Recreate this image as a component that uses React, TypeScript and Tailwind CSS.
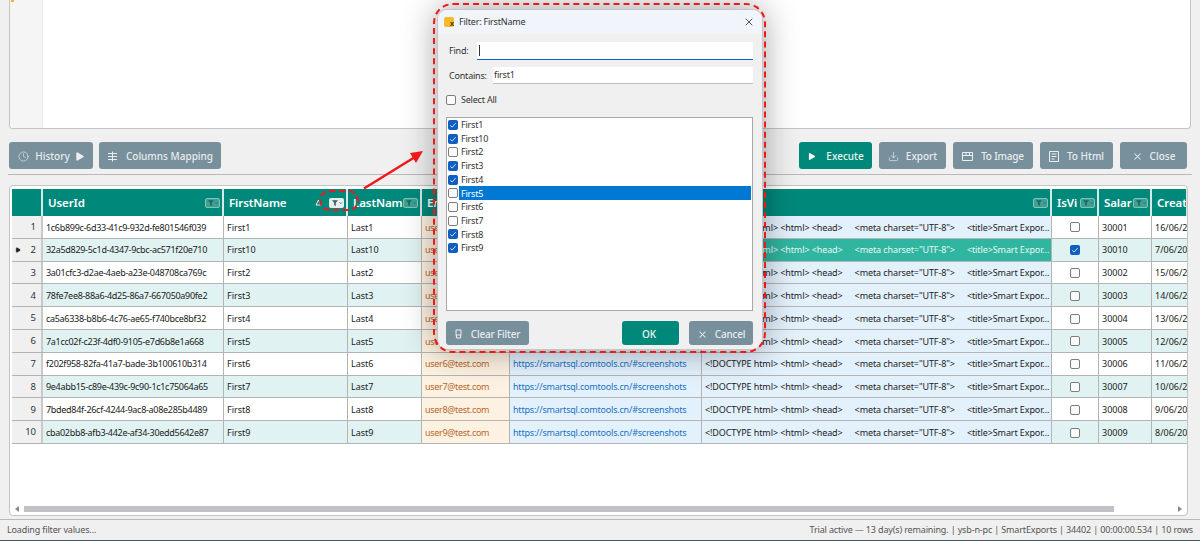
import React from "react";
import { Clock, Download, Play, X } from "lucide-react";

interface Row {
  id: string;
  first: string;
  last: string;
  email: string;
  salary: string;
  created: string;
  checked?: boolean;
  selected?: boolean;
}

const rows: Row[] = [
  { id: "1c6b899c-6d33-41c9-932d-fe801546f039", first: "First1", last: "Last1", email: "user0@test.com", salary: "30001", created: "16/06/2025" },
  { id: "32a5d829-5c1d-4347-9cbc-ac571f20e710", first: "First10", last: "Last10", email: "user9@test.com", salary: "30010", created: "7/06/2025", checked: true, selected: true },
  { id: "3a01cfc3-d2ae-4aeb-a23e-048708ca769c", first: "First2", last: "Last2", email: "user1@test.com", salary: "30002", created: "15/06/2025" },
  { id: "78fe7ee8-88a6-4d25-86a7-667050a90fe2", first: "First3", last: "Last3", email: "user2@test.com", salary: "30003", created: "14/06/2025" },
  { id: "ca5a6338-b8b6-4c76-ae65-f740bce8bf32", first: "First4", last: "Last4", email: "user3@test.com", salary: "30004", created: "13/06/2025" },
  { id: "7a1cc02f-c23f-4df0-9105-e7d6b8e1a668", first: "First5", last: "Last5", email: "user4@test.com", salary: "30005", created: "12/06/2025" },
  { id: "f202f958-82fa-41a7-bade-3b100610b314", first: "First6", last: "Last6", email: "user6@test.com", salary: "30006", created: "11/06/2025" },
  { id: "9e4abb15-c89e-439c-9c90-1c1c75064a65", first: "First7", last: "Last7", email: "user7@test.com", salary: "30007", created: "10/06/2025" },
  { id: "7bded84f-26cf-4244-9ac8-a08e285b4489", first: "First8", last: "Last8", email: "user8@test.com", salary: "30008", created: "9/06/2025" },
  { id: "cba02bb8-afb3-442e-af34-30edd5642e87", first: "First9", last: "Last9", email: "user9@test.com", salary: "30009", created: "8/06/2025" },
];

const filterItems = [
  { label: "First1", checked: true },
  { label: "First10", checked: true },
  { label: "First2", checked: false },
  { label: "First3", checked: true },
  { label: "First4", checked: true },
  { label: "First5", checked: false, selected: true },
  { label: "First6", checked: false },
  { label: "First7", checked: false },
  { label: "First8", checked: true },
  { label: "First9", checked: true },
];

const slateBtn =
  "flex items-center justify-center rounded-[3px] bg-[#78909c] pt-[2px] text-[10px] font-medium text-[#e6ebee]";
const tealBtn =
  "flex items-center justify-center rounded-[3px] bg-[#00897b] pt-[2px] text-[10px] font-medium text-[#e9f5f3]";

const FilterIcon = ({ active }: { active?: boolean }) => (
  <span
    className={
      active
        ? "flex h-[10px] w-[15px] shrink-0 items-center justify-center rounded-[2px] bg-[#e8f0ef]"
        : "flex h-[10px] w-[15px] shrink-0 items-center justify-center rounded-[2px] border border-[#7fc4bb] bg-[#3f9f93]"
    }
  >
    <svg width="13" height="8" viewBox="0 0 13 8" fill="none">
      <path d="M2 1.200h6L5.800 3.800V7L4.200 6.200V3.800z" fill={active ? "#33615b" : "#0f6d62"} />
      <path d="M9.600 3.400l1.200 1.200 1.200-1.200" stroke={active ? "#33615b" : "#0f6d62"} strokeWidth="0.8" />
    </svg>
  </span>
);

const CheckBox = ({ checked, size }: { checked?: boolean; size: string }) => (
  <span
    className={
      (checked
        ? "flex items-center justify-center rounded-[2px] bg-[#0f5fc0] "
        : "flex items-center justify-center rounded-[2px] border border-[#7d7d7d] bg-[#fbfbfb] ") + size
    }
  >
    {checked && (
      <svg width="8" height="8" viewBox="0 0 8 8" fill="none">
        <path d="M1.300 4.300l1.800 1.800 3.600-4" stroke="#dbe9fb" strokeWidth="0.9" />
      </svg>
    )}
  </span>
);

const HeaderCell = ({ className, label, filter = true }: { className: string; label?: string; filter?: boolean }) => (
  <div className={"flex h-full shrink-0 items-center justify-between overflow-hidden border-r-2 border-[#d8e8e6] pr-[2px] pl-[5px] " + className}>
    <span className="text-[11.5px] font-semibold tracking-[-0.1px] text-white">{label}</span>
    {filter && <FilterIcon />}
  </div>
);

const cellBase = "flex h-full shrink-0 items-center overflow-hidden whitespace-nowrap border-r border-[#b4b4b4] pt-[1px] pl-[3px]";

const TableRow = ({ row, index }: { row: Row; index: number }) => {
  const tint = index % 2 === 1 ? "bg-[#e0f2f1]" : "bg-white";
  return (
    <div className="flex h-[22.8px] border-b border-[#b4b4b4] text-[9px] tracking-[-0.3px] text-[#222]">
      <div className="flex h-full w-[31px] shrink-0 items-center justify-end border-r-2 border-[#c9c9c9] bg-[#f0f0f0] pt-[1px] pr-[5px] text-[9.5px] tracking-normal text-[#333]">
        {row.selected && <Play size={6} fill="#222" stroke="#222" className="mr-auto ml-[3px]" />}
        {index + 1}
      </div>
      <div className={cellBase + " w-[181px] pl-[2px] " + tint}>{row.id}</div>
      <div className={cellBase + " w-[124px] tracking-normal " + tint}>{row.first}</div>
      <div className={cellBase + " w-[74px] tracking-normal " + tint}>{row.last}</div>
      <div className={cellBase + " w-[88px] bg-[#fdf1e1] text-[#b9682c]"}>{row.email}</div>
      <div className={cellBase + " w-[192px] bg-[#e3f1fd] tracking-[-0.2px] text-[#1a72c4]"}>https://smartsql.comtools.cn/#screenshots</div>
      <div className={cellBase + " w-[350px] tracking-[-0.1px] " + (row.selected ? "bg-[#30b5a0] text-[#e8f7f4]" : "bg-[#e3f1fd]")}>
        {"<!DOCTYPE html> <html> <head>"}
        <span className="ml-[12px]">{'<meta charset="UTF-8">'}</span>
        <span className="ml-[12px]">{"<title>Smart Expor..."}</span>
      </div>
      <div className={cellBase + " w-[47px] justify-center pr-[3px] pl-0 " + tint}>
        <CheckBox checked={row.checked} size="h-[10px] w-[10px]" />
      </div>
      <div className={cellBase + " w-[53px] tracking-normal " + tint}>{row.salary}</div>
      <div className={cellBase + " w-[36px] border-r-0 tracking-normal " + tint}>{row.created}</div>
    </div>
  );
};

const FilterDialog = () => (
  <div className="absolute top-[9px] left-[437px] flex h-[341px] w-[326px] flex-col overflow-hidden rounded-[10px] border border-[#c4c4c4] bg-[#f0f0f0] shadow-[0_0_34px_rgba(0,0,0,0.38)]">
    <div className="flex h-[24px] shrink-0 items-center bg-[#f1f4fa] pr-[7px] pl-[6px]">
      <span className="flex h-[10px] w-[10px] items-end justify-end rounded-[2px] bg-[#f6b92c] text-[7px] leading-[7px] font-bold text-[#5a3a00]">x</span>
      <span className="ml-[5px] text-[9px] tracking-[-0.2px] text-[#333]">Filter: FirstName</span>
      <X size={12} strokeWidth={1.5} className="ml-auto text-[#222]" />
    </div>
    <div className="flex flex-1 flex-col pt-[8px] pr-[9px] pb-[5px] pl-[8px] text-[9px] tracking-[-0.2px] text-[#333]">
      <div className="flex h-[18px] items-center">
        <span className="ml-[3px] w-[28px]">Find:</span>
        <div className="flex h-full flex-1 items-center border-b-[1.5px] border-[#0a66c8] bg-white pl-[2px]">
          <span className="h-[11px] w-px bg-[#333]" />
        </div>
      </div>
      <div className="mt-[7px] flex h-[17px] items-center">
        <span className="ml-[3px] w-[44px]">Contains:</span>
        <div className="flex h-full flex-1 items-center border-b border-[#bdbdbd] bg-white pl-[1px]">first1</div>
      </div>
      <div className="mt-[10px] flex h-[12px] items-center gap-[5px]">
        <CheckBox size="h-[10px] w-[10px]" />
        <span>Select All</span>
      </div>
      <div className="mt-[11px] flex h-[194px] flex-col border border-[#a8a8a8] bg-white pr-[1px] pl-[1px]">
        {filterItems.map((item) => (
          <div key={item.label} className="flex h-[13.7px] shrink-0 items-center">
            <CheckBox checked={item.checked} size="h-[10px] w-[10px] shrink-0" />
            <span className={item.selected ? "ml-[1px] flex h-full flex-1 items-center bg-[#0078d4] pl-[2px] text-white" : "ml-[1px] pl-[2px]"}>
              {item.label}
            </span>
          </div>
        ))}
      </div>
      <div className="mt-[10px] flex items-center">
        <button className={slateBtn + " h-[24px] w-[83px] gap-[9px]"}>
          <svg width="7" height="10" viewBox="0 0 7 10" fill="none">
            <path d="M1 1h5v4l-.6 4H1.600L1 5z" stroke="#eceff1" strokeWidth="1" />
            <path d="M1 6h5" stroke="#eceff1" strokeWidth="1" />
          </svg>
          Clear Filter
        </button>
        <button className={tealBtn + " ml-auto h-[24px] w-[57px] pr-[3px]"}>OK</button>
        <button className={slateBtn + " ml-[10px] h-[24px] w-[64px] gap-[7px]"}>
          <X size={11} strokeWidth={2.2} />
          Cancel
        </button>
      </div>
    </div>
  </div>
);

const App: React.FC = () => {
  return (
    <div className="relative flex h-[541px] w-[1200px] flex-col overflow-hidden bg-[#f0f0f0] [font-family:'Noto_Sans',sans-serif]">
      {/* Editor */}
      <div className="mx-[9px] flex h-[129px] shrink-0 overflow-hidden rounded-b-[4px] border-r border-b border-l border-[#c4c4c4] bg-white">
        <div className="h-full w-[33px] border-r border-[#ececec] bg-[#f5f5f5]">
          <div className="ml-[1px] h-[2px] w-[3px] bg-[#f2b632]" />
        </div>
      </div>

      {/* Toolbar */}
      <div className="mt-[13px] flex shrink-0 items-center px-[9px]">
        <button className={slateBtn + " h-[27px] w-[84px] gap-[4px] pl-[1px]"}>
          <Clock size={11} strokeWidth={1.4} />
          <span className="ml-[2px]">History</span>
          <Play size={11} fill="#eceff1" strokeWidth={0} />
        </button>
        <button className={slateBtn + " ml-[6px] h-[27px] w-[122px] gap-[8px]"}>
          <svg width="11" height="11" viewBox="0 0 11 11" fill="none" stroke="#eceff1" strokeWidth="1">
            <path d="M1 2.500h9M1 5.500h9M1 8.500h9M5.500 .5v10" />
          </svg>
          Columns Mapping
        </button>
        <button className={tealBtn + " ml-auto h-[27px] w-[73px] gap-[10px]"}>
          <Play size={9} fill="#ffffff" strokeWidth={0} />
          Execute
        </button>
        <button className={slateBtn + " ml-[7px] h-[27px] w-[67px] gap-[7px]"}>
          <Download size={11} strokeWidth={1.5} />
          Export
        </button>
        <button className={slateBtn + " ml-[7px] h-[27px] w-[80px] gap-[8px] tracking-[-0.2px]"}>
          <svg width="11" height="9" viewBox="0 0 11 9" fill="none" stroke="#eceff1" strokeWidth="1">
            <path d="M.5 .5h10v8H.5zM.5 3.500h10M4 .5v3M7.500 .5v3" />
          </svg>
          To Image
        </button>
        <button className={slateBtn + " ml-[7px] h-[27px] w-[73px] gap-[8px]"}>
          <svg width="10" height="11" viewBox="0 0 10 11" fill="none" stroke="#eceff1" strokeWidth="1">
            <path d="M.5 .5h9v10h-9zM2.500 3h5M2.500 5.500h5M2.500 8h3" />
          </svg>
          To Html
        </button>
        <button className={slateBtn + " mr-[4px] ml-[7px] h-[27px] w-[67px] gap-[7px]"}>
          <X size={11} strokeWidth={2.2} />
          Close
        </button>
      </div>

      <div className="mx-[8px] mt-[5px] h-px shrink-0 bg-[#b9b9b9]" />

      {/* Result grid */}
      <div className="mt-[10px] mr-[12px] ml-[9px] flex h-[331px] shrink-0 flex-col overflow-hidden rounded-[4px] border border-[#c4c4c4] bg-white pt-[3px]">
        <div className="ml-[2px] flex-1 overflow-hidden">
          <div className="flex h-[27px] bg-[#00897b]">
            <div className="h-full w-[31px] shrink-0 border-r-2 border-[#d8e8e6]" />
            <HeaderCell className="w-[181px]" label="UserId" />
            <div className="flex h-full w-[124px] shrink-0 items-center border-r-2 border-[#d8e8e6] pr-[2px] pl-[5px]">
              <span className="text-[11.5px] font-semibold tracking-[-0.1px] text-white">FirstName</span>
              <svg className="mr-[7px] ml-auto" width="7" height="7" viewBox="0 0 7 7" fill="none">
                <path d="M3.500 1L6 6H1z" stroke="#ffffff" strokeWidth="0.9" />
              </svg>
              <FilterIcon active />
            </div>
            <HeaderCell className="w-[74px]" label="LastNam" />
            <HeaderCell className="w-[88px]" label="Email" />
            <HeaderCell className="w-[192px]" label="Url" />
            <HeaderCell className="w-[350px]" label="Html" />
            <HeaderCell className="w-[47px]" label="IsVi" />
            <HeaderCell className="w-[53px]" label="Salar" />
            <HeaderCell className="w-[36px] border-r-0" label="Create" filter={false} />
          </div>
          {rows.map((row, index) => (
            <TableRow key={row.id} row={row} index={index} />
          ))}
        </div>
        <div className="mb-[3px] flex h-[7px] shrink-0 items-center">
          <span className="ml-[5px] h-0 w-0 border-y-[3px] border-r-[4px] border-y-transparent border-r-[#8a8a8a]" />
          <div className="ml-[5px] h-[6px] w-[1090px] bg-[#c1c1c6]" />
          <span className="mr-[5px] ml-auto h-0 w-0 border-y-[3px] border-l-[4px] border-y-transparent border-l-[#8a8a8a]" />
        </div>
      </div>

      {/* Status bar */}
      <div className="mt-[3px] flex flex-1 items-center justify-between border-t border-b border-t-[#b9b9b9] border-b-[#3f5a68] pr-[7px] pl-[7px] text-[9px] tracking-[-0.15px] text-[#555]">
        <span>Loading filter values...</span>
        <span>Trial active — 13 day(s) remaining. | ysb-n-pc | SmartExports | 34402 | 00:00:00.534 | 10 rows</span>
      </div>

      {/* Annotations */}
      <FilterDialog />
      <div className="pointer-events-none absolute top-[3px] left-[433px] h-[350px] w-[333px] rounded-[20px] border-2 border-dashed border-[#f01818]" />
      <div className="pointer-events-none absolute top-[190px] left-[319px] h-[21px] w-[40px] rounded-full border-2 border-dashed border-[#f01818]" />
      <svg className="pointer-events-none absolute top-[145px] left-[358px]" width="70" height="50" viewBox="0 0 70 50" fill="none">
        <path d="M6 43.500L57 12" stroke="#f01818" strokeWidth="2.500" />
        <path d="M65 6L52 8L58 18z" fill="#f01818" />
      </svg>
    </div>
  );
};

export default App;
